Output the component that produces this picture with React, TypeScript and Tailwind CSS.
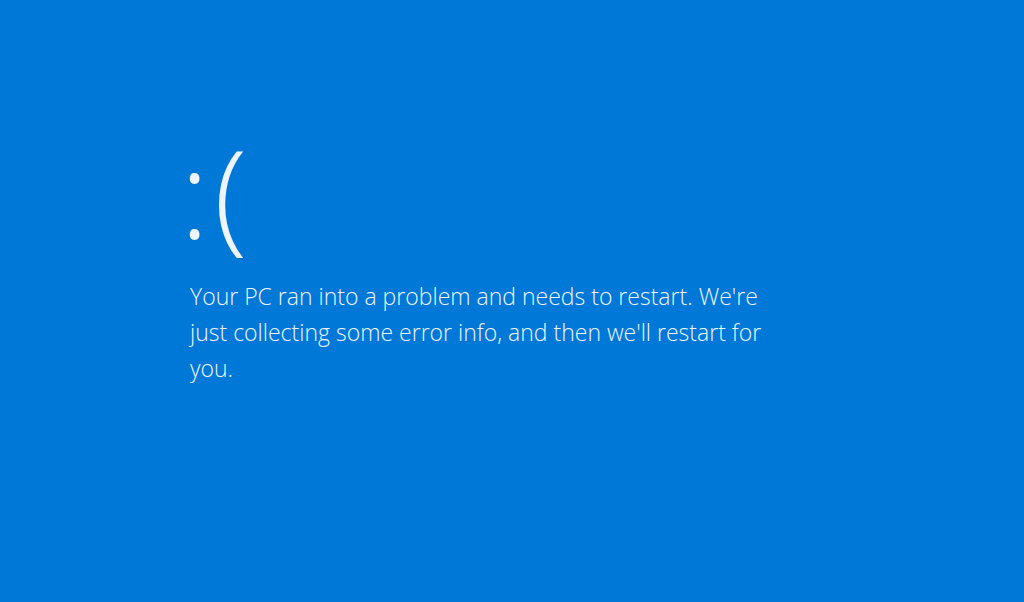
export default function App() {
	return (
		<main className="h-[602px] w-[1024px] overflow-hidden bg-[#0078d7] pl-[186px] pt-[122px] text-[#eef5fc] font-['Open_Sans',sans-serif] font-light">
			<div className="flex text-[122px] leading-[140px] -ml-[6px]">
				<span>:</span>
				<span className="ml-[5px]">(</span>
			</div>
			<p className="mt-[16px] max-w-[600px] pl-[4px] text-[23px] leading-[36px]">
				Your PC ran into a problem and needs to restart. We're just
				collecting some error info, and then we'll restart for you.
			</p>
		</main>
	)
}
